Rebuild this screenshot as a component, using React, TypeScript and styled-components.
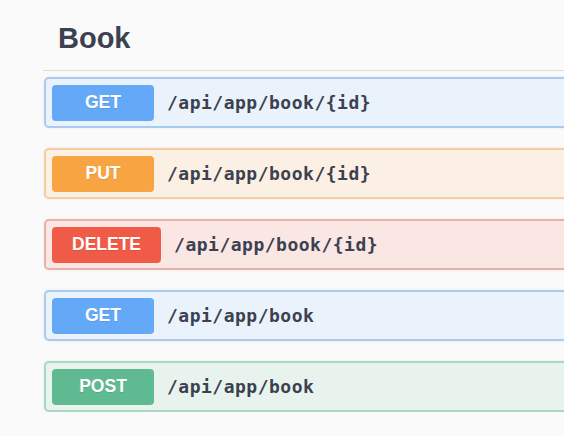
import styled, { createGlobalStyle } from 'styled-components';

const GlobalStyle = createGlobalStyle`
  html, body {
    margin: 0;
    padding: 0;
    background: #fafafa;
    overflow: hidden;
  }
  body {
    font-family: 'Liberation Sans', Arial, sans-serif;
  }
`;

type Method = 'GET' | 'PUT' | 'DELETE' | 'POST';

const colors: Record<Method, { badge: string; bg: string; border: string }> = {
  GET: { badge: '#63a9f7', bg: '#eaf2fb', border: '#a9cbf0' },
  PUT: { badge: '#f9a443', bg: '#fbf0e3', border: '#f3cf9f' },
  DELETE: { badge: '#f05b47', bg: '#fae6e3', border: '#eab1a8' },
  POST: { badge: '#5fba91', bg: '#e9f3ed', border: '#a9d9c0' },
};

const endpoints: { method: Method; path: string }[] = [
  { method: 'GET', path: '/api/app/book/{id}' },
  { method: 'PUT', path: '/api/app/book/{id}' },
  { method: 'DELETE', path: '/api/app/book/{id}' },
  { method: 'GET', path: '/api/app/book' },
  { method: 'POST', path: '/api/app/book' },
];

const Page = styled.div`
  padding-left: 43px;
  margin-right: -40px;
`;

const TagHeader = styled.div`
  padding: 24px 0 18px 15px;
  border-bottom: 1px solid #dcdcdc;
`;

const Title = styled.h3`
  margin: 0;
  font-size: 29px;
  line-height: 28px;
  font-weight: 700;
  color: #3b4151;
`;

const List = styled.div`
  display: flex;
  flex-direction: column;
  gap: 20px;
  padding-top: 6px;
  margin-left: 1px;
`;

const Block = styled.div<{ $method: Method }>`
  display: flex;
  align-items: center;
  height: 51px;
  box-sizing: border-box;
  padding: 0 6px;
  background: ${(p) => colors[p.$method].bg};
  border: 2px solid ${(p) => colors[p.$method].border};
  border-radius: 5px;
  box-shadow: 0 0 3px rgba(0, 0, 0, 0.08);
`;

const Badge = styled.span<{ $method: Method }>`
  display: flex;
  align-items: center;
  justify-content: center;
  box-sizing: border-box;
  min-width: 102px;
  height: 36px;
  padding: 0 20px;
  border-radius: 4px;
  background: ${(p) => colors[p.$method].badge};
  color: #fff;
  font-size: 17.5px;
  font-weight: 700;
  text-shadow: 0 1px 0 rgba(0, 0, 0, 0.1);
`;

const Path = styled.span`
  padding-left: 13px;
  font-family: 'DejaVu Sans Mono', 'Liberation Mono', monospace;
  font-size: 18px;
  letter-spacing: 0.5px;
  font-weight: 700;
  color: #3b4151;
`;

export default function App() {
  return (
    <Page>
      <GlobalStyle />
      <TagHeader>
        <Title>Book</Title>
      </TagHeader>
      <List>
        {endpoints.map((e, i) => (
          <Block key={i} $method={e.method}>
            <Badge $method={e.method}>{e.method}</Badge>
            <Path>{e.path}</Path>
          </Block>
        ))}
      </List>
    </Page>
  );
}
